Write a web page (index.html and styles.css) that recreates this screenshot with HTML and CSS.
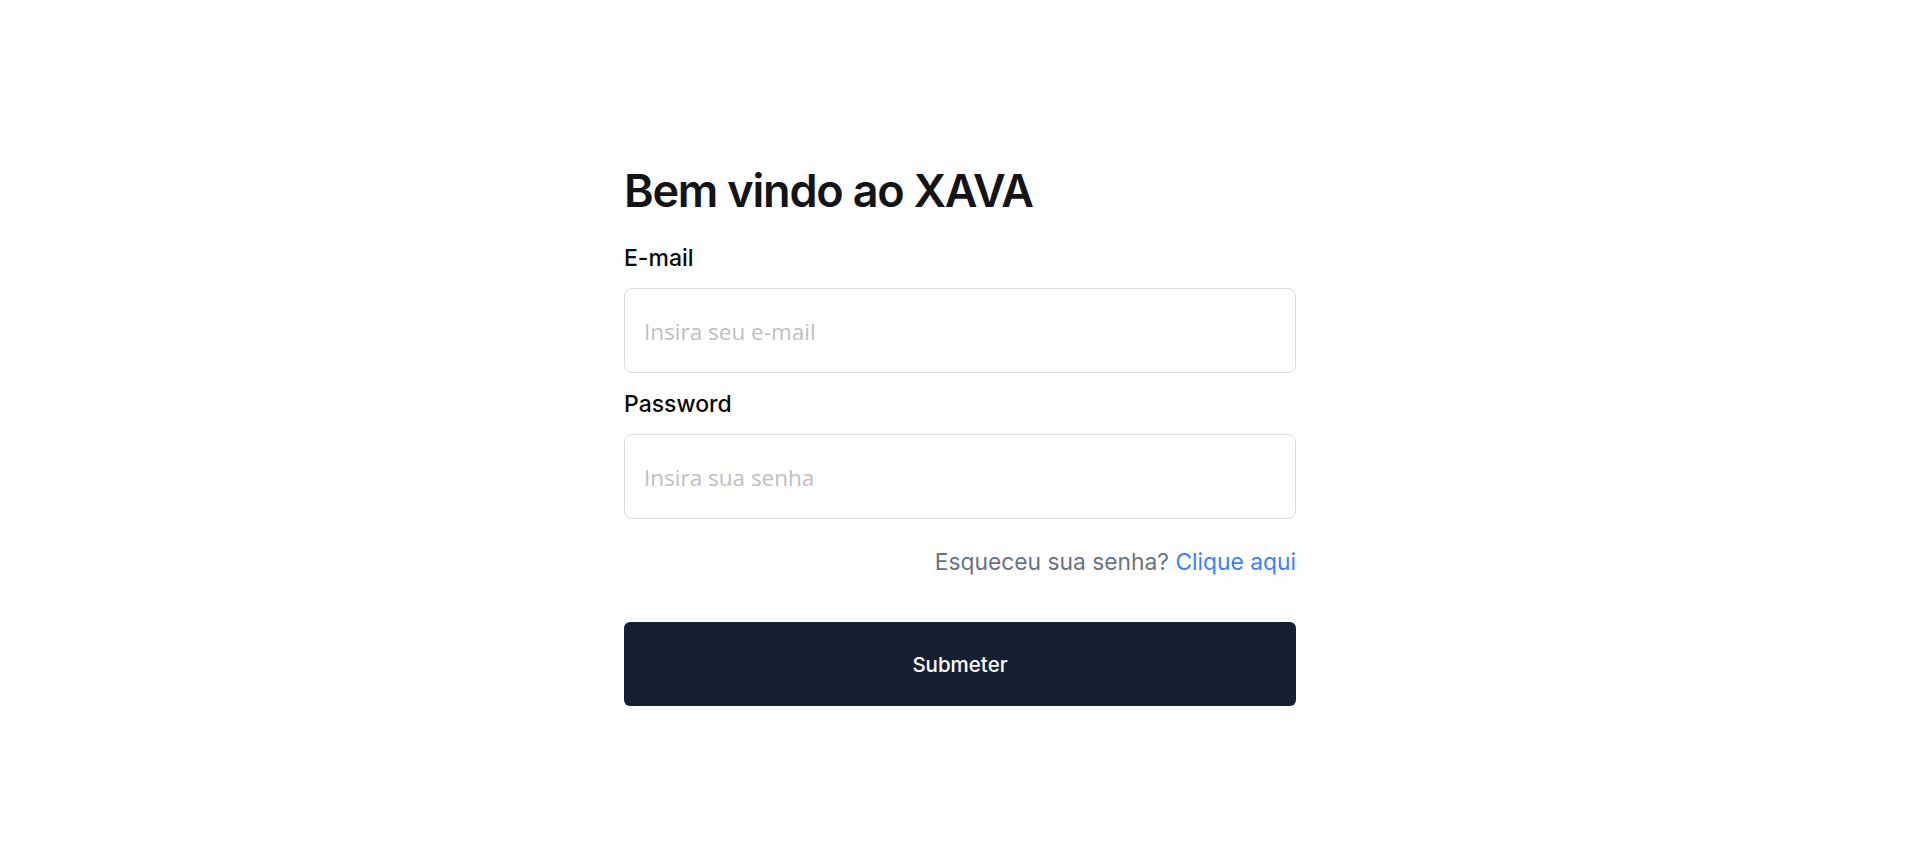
FILE: index.html
```html
<!DOCTYPE html>
<html lang="pt">

<head>
    <meta charset="UTF-8" />
    <meta name="viewport" content="width=device-width, initial-scale=1.0" />
    <title>XAVA - Login</title>
    <link rel="stylesheet" href="styles.css">
</head>

<body>
    <main class="page">
        <form class="login-form">
            <h1 class="login-title">Bem vindo ao XAVA</h1>

            <div class="field">
                <label class="field-label" for="email">E-mail</label>
                <input class="field-input" type="email" id="email" placeholder="Insira seu e-mail">
            </div>

            <div class="field">
                <label class="field-label" for="password">Password</label>
                <input class="field-input" type="password" id="password" placeholder="Insira sua senha">
            </div>

            <p class="forgot">Esqueceu sua senha? <a class="forgot-link" href="#">Clique aqui</a></p>

            <button class="submit-button" type="submit">Submeter</button>
        </form>
    </main>
</body>

</html>
```

FILE: styles.css
```css
body {
    margin: 0;
    background: #ffffff;
    font-family: 'Inter', 'Noto Sans', sans-serif;
    color: #111111;
}

.page {
    padding: 161px 0 0 624px;
}

.login-form {
    width: 672px;
    display: flex;
    flex-direction: column;
}

.login-title {
    margin: 0 0 21px;
    font-size: 45px;
    line-height: 60px;
    font-weight: 600;
    color: #121417;
    letter-spacing: -1.2px;
}

.field {
    display: flex;
    flex-direction: column;
    gap: 14px;
    margin-bottom: 15px;
}

.field-label {
    font-size: 23px;
    line-height: 32px;
    font-weight: 500;
    color: #0a0a0a;
}

.field-input {
    box-sizing: border-box;
    height: 85px;
    padding: 1px 19px 0;
    border: 1.5px solid #dcdcdc;
    border-radius: 8px;
    font-family: 'Open Sans', 'Noto Sans', sans-serif;
    font-size: 22.5px;
    color: #222222;
    outline: none;
}

.field-input::placeholder {
    color: #bfbfbf;
}

.forgot {
    margin: 12px 0 44px;
    text-align: right;
    font-size: 22.8px;
    line-height: 32px;
    color: #6b7280;
}

.forgot-link {
    color: #3b82f6;
    text-decoration: none;
}

.submit-button {
    height: 84px;
    border: none;
    border-radius: 6px;
    background: #172033;
    color: #ffffff;
    font-family: 'Inter', 'Noto Sans', sans-serif;
    font-size: 20.5px;
    font-weight: 500;
    cursor: pointer;
}
```
